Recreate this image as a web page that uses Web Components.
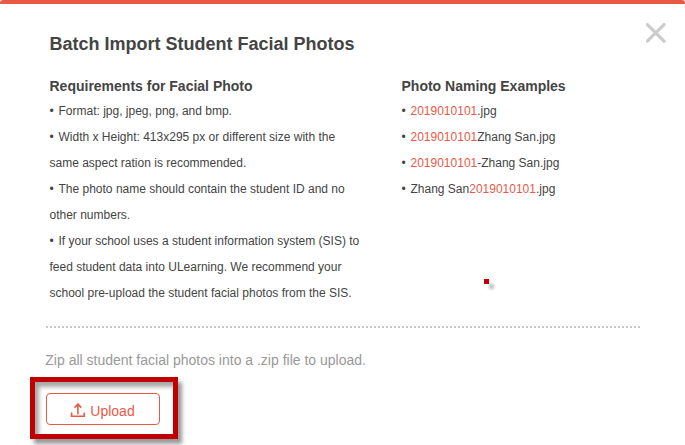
<!DOCTYPE html>
<html lang="en">
<head>
<meta charset="utf-8">
<title>Batch Import Student Facial Photos</title>
<style>
html,body{margin:0;width:685px;height:445px;overflow:hidden;background:#fff}
body{font-family:"Liberation Sans",Arial,sans-serif;color:#444}
</style>
</head>
<body>
<import-dialog></import-dialog>
<script>
const define = (name, html) => customElements.define(name, class extends HTMLElement {
  constructor() {
    super();
    const t = document.createElement('template');
    t.innerHTML = html;
    this.attachShadow({mode: 'open'}).append(t.content.cloneNode(true));
  }
});

define('close-icon', `
<style>:host{display:block;width:20px;height:20px}svg{display:block}</style>
<svg width="20" height="20" viewBox="0 0 20 20"><path d="M1.4 1.6 18 18.2M18 1.6 1.4 18.2" stroke="#ccc" stroke-width="3.2" stroke-linecap="round" fill="none"/></svg>`);

define('upload-icon', `
<style>:host{display:block;width:15px;height:15px}svg{display:block}</style>
<svg width="15" height="15" viewBox="0 0 15 15" fill="none" stroke="#ea5947" stroke-width="1.6"><path d="M1.6 9.6V13.2H14.2V9.6M7.9 11.2V1.2M4.6 4.6 7.9 1.1 11.2 4.6"/></svg>`);

define('note-item', `
<style>:host{display:block;font-size:12px;line-height:26px;white-space:nowrap}.dot{display:inline-block;width:9px}</style>
<span class="dot">•</span><slot></slot>`);

define('id-number', `<style>:host{color:#ea5947}</style><slot></slot>`);

define('note-section', `
<style>:host{display:block}h2{margin:0 0 4px;font-size:14px;line-height:16px;font-weight:bold;white-space:nowrap}</style>
<h2><slot name="heading"></slot></h2><slot></slot>`);

define('upload-button', `
<style>
:host{display:block;width:114px;height:32px}
button{box-sizing:border-box;width:114px;height:32px;margin:0;padding:3px 1px 0 0;border:1px solid #ea5947;border-radius:4px;background:#fff;color:#ea5947;font:14px/18px "Liberation Sans",Arial,sans-serif;display:flex;justify-content:center;align-items:center;gap:5px}
</style>
<button><upload-icon></upload-icon><span><slot></slot></span></button>`);

define('highlight-frame', `
<style>:host{display:block;box-sizing:border-box;width:148px;height:62px;border:5px solid #c00000;padding:11px;box-shadow:4px 5px 4px rgba(0,0,0,.4),inset 4px 5px 4px rgba(0,0,0,.35)}</style>
<slot></slot>`);

define('marker-dot', `
<style>:host{display:block;width:5px;height:5px;background:#c00000;box-shadow:5px 5px 3px rgba(0,0,0,.25)}</style>`);

define('import-dialog', `
<style>
:host{display:block;position:relative;box-sizing:border-box;width:685px;height:445px;border-top:4px solid #ea5947;border-radius:3px 3px 2px 2px;background:#fff;overflow:hidden}
header{display:flex;justify-content:space-between;padding:19px 19.5px 0 49.5px;height:55px;box-sizing:border-box}
h1{margin:11px 0 0;font-size:18px;line-height:20px;font-weight:bold;white-space:nowrap}
main{display:grid;grid-template-columns:352px 1fr;padding:19px 0 0 49.5px;height:267px;box-sizing:border-box}
.rule{width:594px;height:2px;margin-left:46px;background:repeating-linear-gradient(90deg,#c8c8cc 0 2px,transparent 2px 4px)}
p{margin:24px 0 0 45.3px;font-size:14px;line-height:16px;color:#999;white-space:nowrap}
highlight-frame{margin:9px 0 0 30px}
marker-dot{position:absolute;left:484px;top:275px}
</style>
<header><h1>Batch Import Student Facial Photos</h1><close-icon></close-icon></header>
<main>
<note-section><span slot="heading">Requirements for Facial Photo</span>
<note-item>Format: jpg, jpeg, png, and bmp.</note-item>
<note-item>Width x Height: 413x295 px or different size with the<br>same aspect ration is recommended.</note-item>
<note-item>The photo name should contain the student ID and no<br>other numbers.</note-item>
<note-item>If your school uses a student information system (SIS) to<br>feed student data into ULearning. We recommend your<br>school pre-upload the student facial photos from the SIS.</note-item>
</note-section>
<note-section><span slot="heading">Photo Naming Examples</span>
<note-item><id-number>2019010101</id-number>.jpg</note-item>
<note-item><id-number>2019010101</id-number>Zhang San.jpg</note-item>
<note-item><id-number>2019010101</id-number>-Zhang San.jpg</note-item>
<note-item>Zhang San<id-number>2019010101</id-number>.jpg</note-item>
</note-section>
</main>
<div class="rule"></div>
<p>Zip all student facial photos into a .zip file to upload.</p>
<highlight-frame><upload-button>Upload</upload-button></highlight-frame>
<marker-dot></marker-dot>`);
</script>
</body>
</html>
